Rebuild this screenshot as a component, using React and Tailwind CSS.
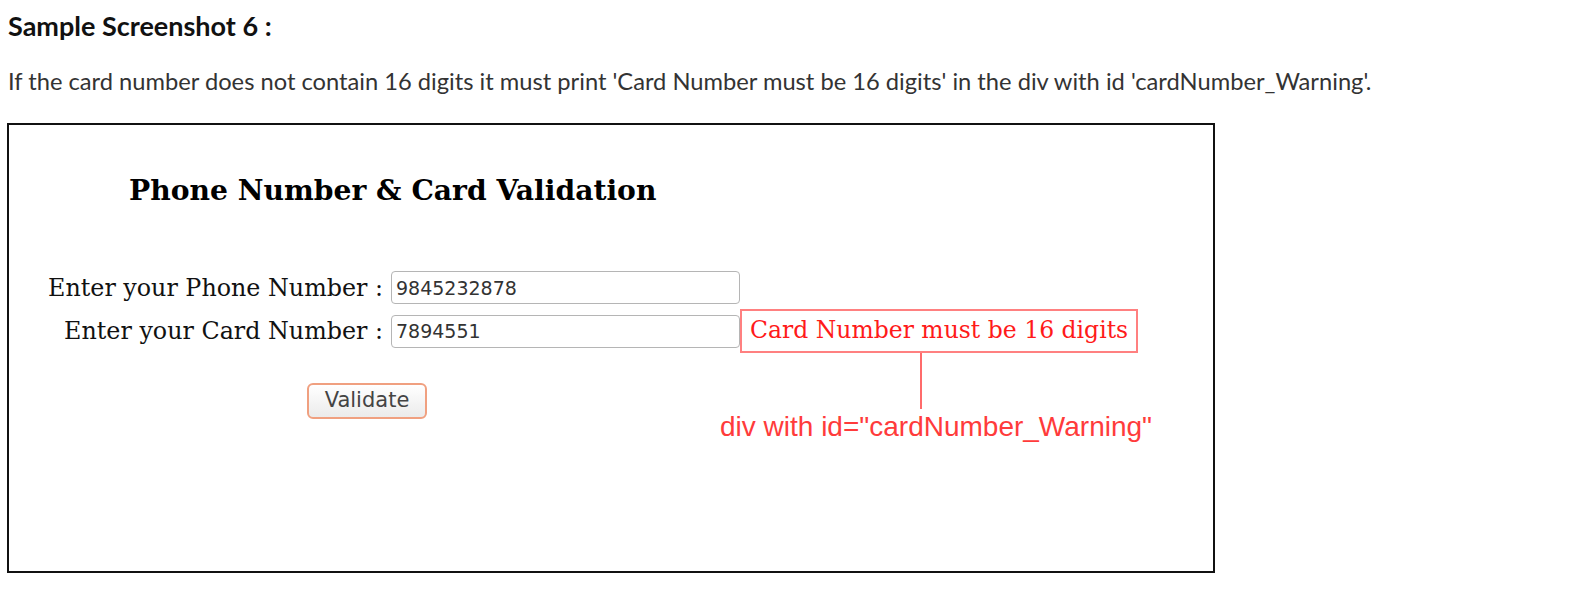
import React from "react";

const Field = ({ label, value, children }) => (
  <div className="flex items-center">
    <label className="w-[382px] pr-[8px] text-right font-['DejaVu_Serif',serif] text-[23.8px] leading-[28px] text-[#111]">
      {label}
    </label>
    <input
      readOnly
      defaultValue={value}
      className="w-[349px] h-[33px] border border-[#b5b5b5] rounded-[4px] px-[4px] font-['DejaVu_Sans',sans-serif] text-[19px] text-[#333] bg-white outline-none"
    />
    {children}
  </div>
);

export default function App() {
  return (
    <div className="min-h-[589px] bg-white">
      <div className="pl-[8px] pt-[10px]">
        <h1 className="font-['Lato',sans-serif] font-bold text-[27px] leading-[32px] text-[#111]">
          Sample Screenshot 6 :
        </h1>
        <p className="mt-[24px] font-['Lato',sans-serif] text-[23.7px] leading-[30px] text-[#333]">
          If the card number does not contain 16 digits it must print 'Card Number must be 16 digits' in the div with id 'cardNumber_Warning'.
        </p>
      </div>

      {/* sample form */}
      <div className="ml-[7px] mt-[27px] w-[1208px] h-[450px] border-2 border-[#111] pt-[49px]">
        <h2 className="pl-[120px] font-['DejaVu_Serif',serif] font-bold text-[28.2px] leading-[34px] text-black">
          Phone Number &amp; Card Validation
        </h2>

        <div className="mt-[63px]">
          <Field label="Enter your Phone Number :" value="9845232878" />
          <div className="mt-[5px]">
            <Field label="Enter your Card Number :" value="7894551">
              <div className="relative h-[44px] border-2 border-[#ff8080] px-[8px] flex items-center font-['DejaVu_Serif',serif] text-[23.5px] text-[#ff1a1a] whitespace-nowrap">
                Card Number must be 16 digits
                <div className="absolute left-[178px] top-[calc(100%+2px)] w-[2px] h-[56px] bg-[#ff6b6b]" />
                <div className="absolute left-[-22px] top-[100px] font-['Liberation_Sans',sans-serif] text-[28px] leading-[32px] text-[#ff3b3b]">
                  div with id="cardNumber_Warning"
                </div>
              </div>
            </Field>
          </div>
        </div>

        <button className="ml-[298px] mt-[30px] w-[120px] h-[36px] border-2 border-[#f0a080] rounded-[6px] bg-gradient-to-b from-white to-[#ebebeb] font-['DejaVu_Sans',sans-serif] text-[21px] text-[#444]">
          Validate
        </button>
      </div>
    </div>
  );
}
